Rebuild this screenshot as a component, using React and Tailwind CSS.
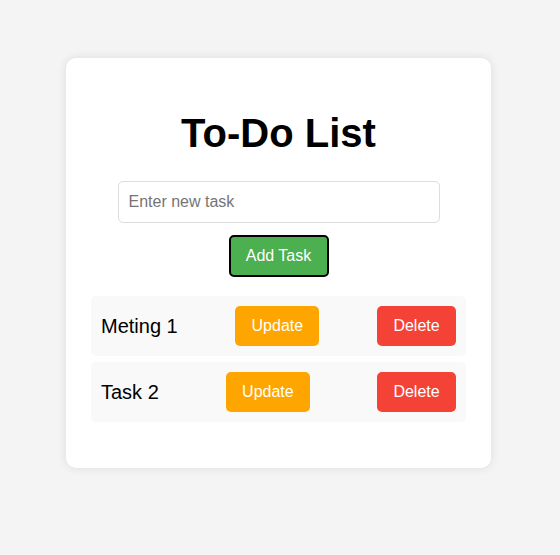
import React, { useState } from 'react';

const App = () => {
    const [tasks] = useState(['Meting 1', 'Task 2']);

    return (
        <div className="flex min-h-[555px] justify-center bg-[#f4f4f4] pt-[58px] pr-[3px] font-['Liberation_Sans',Arial,sans-serif]">
            {/* CARD */}
            <div className="h-fit w-[425px] rounded-[10px] bg-white px-[25px] pt-[52px] pb-[46px] shadow-[0_0_10px_rgba(0,0,0,0.1)]">
                <h1 className="text-center text-[40px] font-bold leading-[46px] text-black">To-Do List</h1>

                <div className="mt-[25px] flex flex-col items-center gap-[12px]">
                    <input
                        type="text"
                        placeholder="Enter new task"
                        className="box-border h-[42px] w-[322px] rounded-[5px] border border-[#dddddd] px-[10px] text-[16px] text-black placeholder:text-[#757575] outline-none"
                    />
                    <button className="h-[42px] w-[100px] rounded-[5px] border-2 border-black bg-[#4caf50] text-[16px] text-white">
                        Add Task
                    </button>
                </div>

                {/* TASKS */}
                <ul className="mt-[19px] flex flex-col gap-[6px]">
                    {tasks.map((task) => (
                        <li key={task} className="flex h-[60px] items-center justify-between rounded-[5px] bg-[#f9f9f9] px-[10px]">
                            <span className="text-[20px] text-black">{task}</span>
                            <button className="h-[40px] w-[84px] rounded-[5px] bg-[#ffa500] text-[16px] text-white">Update</button>
                            <button className="h-[40px] w-[79px] rounded-[5px] bg-[#f44336] text-[16px] text-white">Delete</button>
                        </li>
                    ))}
                </ul>
            </div>
        </div>
    );
};

export default App;
